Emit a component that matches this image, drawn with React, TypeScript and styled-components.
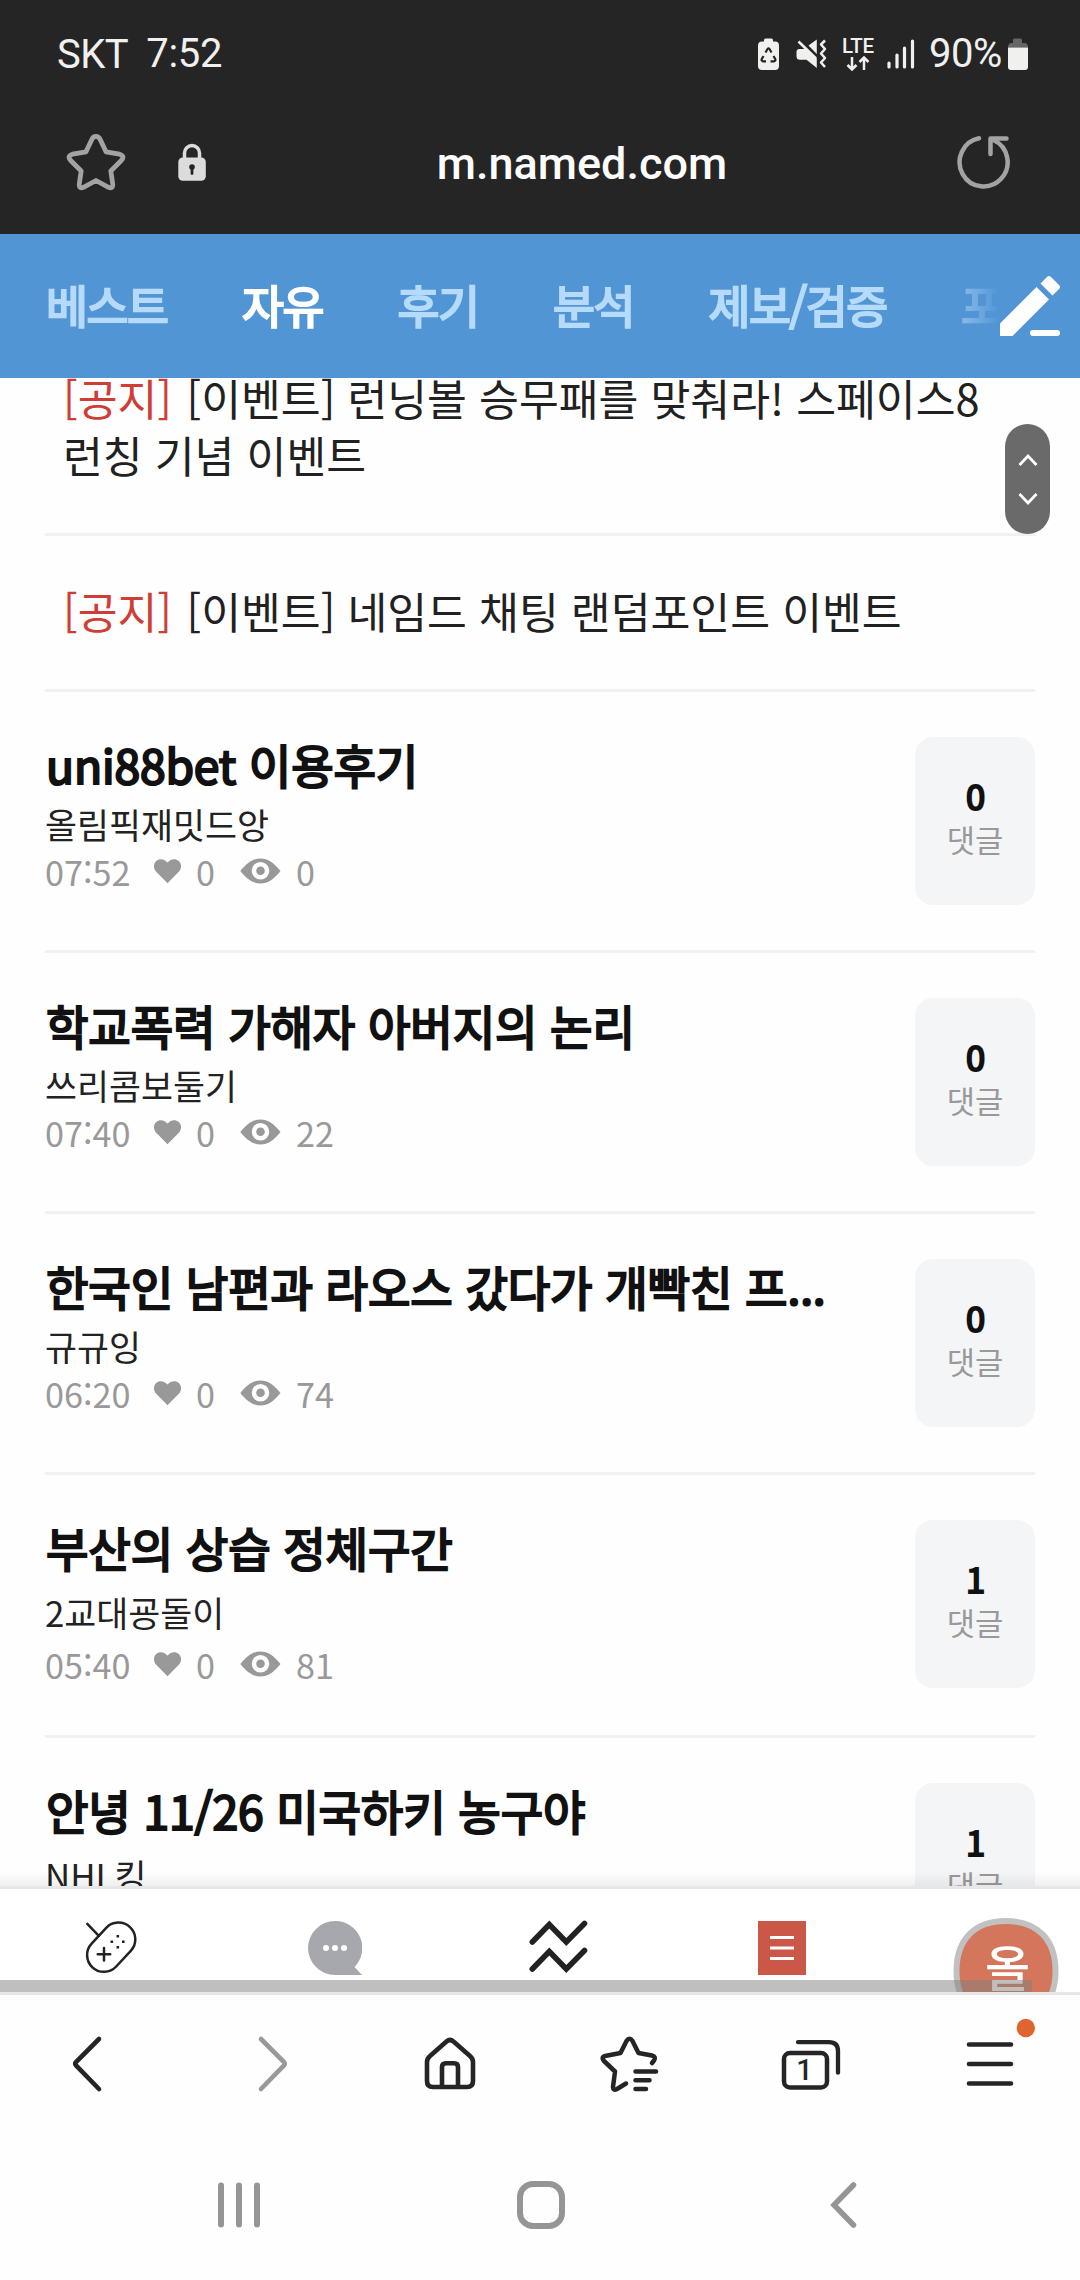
import React from "react";
import styled, { createGlobalStyle } from "styled-components";

const GlobalStyle = createGlobalStyle`
  *, *::before, *::after { box-sizing: border-box; }
  body {
    margin: 0;
    background: #fefefe;
    font-family: "Noto Sans CJK KR", "Noto Sans", sans-serif;
  }
  svg { display: block; flex: none; }
`;

const Screen = styled.div`
  width: 1080px;
  height: 2280px;
  display: flex;
  flex-direction: column;
  overflow: hidden;
  background: #fefefe;
`;

/* ---------- system status bar ---------- */

const StatusBar = styled.header`
  flex: none;
  height: 108px;
  padding: 0 52px 0 57px;
  display: flex;
  align-items: center;
  justify-content: space-between;
  background: #252525;
  color: #f0f0ee;
  font-family: Roboto, sans-serif;
  font-size: 40px;
  line-height: 48px;
`;

const StatusLeft = styled.div`
  display: flex;
  gap: 18px;
`;

const StatusText = styled.span<{ $shift?: number; $spacing?: number }>`
  margin-top: ${(p) => p.$shift ?? 0}px;
  letter-spacing: ${(p) => p.$spacing ?? 0}px;
`;

const BatteryLevel = styled(StatusText)`
  margin: 0 3px 0 7px;
`;

const StatusRight = styled.div`
  display: flex;
  align-items: center;
`;

/* ---------- address bar ---------- */

const AddressBar = styled.div`
  flex: none;
  height: 126px;
  padding: 0 68px 14px 65px;
  display: flex;
  align-items: center;
  background: #252525;
`;

const AddressSide = styled.div<{ $end?: boolean }>`
  width: 200px;
  display: flex;
  gap: 51px;
  justify-content: ${(p) => (p.$end ? "flex-end" : "flex-start")};
`;

const Domain = styled.div`
  flex: 1;
  padding-left: 87px;
  text-align: center;
  color: #fcfcfc;
  font-family: Roboto, sans-serif;
  font-size: 45px;
  font-weight: 500;
  line-height: 60px;
`;

/* ---------- board tabs ---------- */

const BoardTabs = styled.nav`
  flex: none;
  height: 144px;
  display: flex;
  align-items: center;
  padding-right: 20px;
  background: #5195d5;
`;

const TabScroller = styled.div`
  flex: 1;
  min-width: 0;
  display: flex;
  gap: 74.6px;
  padding: 0 0 4px 46px;
  overflow: hidden;
  -webkit-mask-image: linear-gradient(to right, #000 930px, transparent 1000px);
  mask-image: linear-gradient(to right, #000 930px, transparent 1000px);
`;

const BoardTab = styled.span<{ $active?: boolean }>`
  flex: none;
  color: ${(p) => (p.$active ? "#ffffff" : "#b5dafa")};
  font-size: 45.6px;
  -webkit-text-stroke: 2.2px currentColor;
  line-height: 70px;
  letter-spacing: -1.5px;
  white-space: nowrap;
`;

/* ---------- post list ---------- */

const ListViewport = styled.main`
  position: relative;
  flex: none;
  height: 1508px;
  padding: 0 45px;
  overflow: hidden;
`;

const NoticeRow = styled.div<{ $scrolled?: boolean }>`
  margin-top: ${(p) => (p.$scrolled ? -55 : 0)}px;
  padding: 46px 18px 50px;
  border-bottom: 3px solid #f1f1f1;
  color: #212121;
  font-size: 43.3px;
  line-height: 57px;
  white-space: nowrap;
`;

const NoticeTag = styled.span`
  margin-right: 2.5px;
  color: #d03d37;
`;

const PostRow = styled.article`
  display: flex;
  justify-content: space-between;
  align-items: flex-start;
  padding: 45px 0;
  border-bottom: 3px solid #f1f1f1;
`;

const PostBody = styled.div<{ $tall?: boolean }>`
  height: ${(p) => (p.$tall ? 170 : 168)}px;
  white-space: nowrap;
`;

const PostTitle = styled.h2`
  margin: 0 0 8px;
  padding-left: 1px;
  color: #111111;
  font-size: 46.2px;
  font-weight: 400;
  -webkit-text-stroke: 2.2px currentColor;
  letter-spacing: -0.15px;
  line-height: 53px;
`;

const PostAuthor = styled.div<{ $tall?: boolean }>`
  color: #222222;
  font-size: 34.8px;
  line-height: ${(p) => (p.$tall ? 63 : 53)}px;
`;

const PostMeta = styled.div`
  display: flex;
  align-items: center;
  color: #999999;
  font-size: 34.2px;
  line-height: 40px;
`;

const MetaValue = styled.span<{ $width?: number }>`
  width: ${(p) => (p.$width ? `${p.$width}px` : "auto")};
`;

const MetaIcon = styled.span`
  display: block;
  margin-right: 15px;
`;

const CommentBox = styled.div`
  width: 120px;
  height: 168px;
  padding-top: 35px;
  border-radius: 18px;
  background: #f4f5f7;
  text-align: center;
`;

const CommentCount = styled.div`
  padding-left: 1px;
  color: #111111;
  font-size: 34.6px;
  -webkit-text-stroke: 2px currentColor;
  line-height: 46px;
`;

const CommentLabel = styled.div`
  margin-top: 2px;
  color: #999999;
  font-size: 30.8px;
  line-height: 38px;
`;

const ScrollPill = styled.div`
  position: absolute;
  top: 46px;
  right: 30px;
  width: 45px;
  height: 110px;
  border-radius: 23px;
  background: #6a6a6a;
`;

const BottomShade = styled.div`
  position: absolute;
  left: 0;
  right: 0;
  bottom: 0;
  height: 15px;
  background: linear-gradient(to bottom, rgba(0, 0, 0, 0), rgba(0, 0, 0, 0.06));
`;

/* ---------- site tab bar ---------- */

const SiteBar = styled.nav`
  position: relative;
  flex: none;
  height: 109px;
  display: flex;
  overflow: hidden;
  border-top: 3px solid #e7e7e7;
  border-bottom: 3px solid #e6e6e6;
  background: #ffffff;
`;

const SiteCell = styled.div`
  flex: none;
  width: 223.5px;
  display: flex;
  justify-content: center;
  padding-top: 29px;
`;

const ScrollThumb = styled.div`
  position: absolute;
  left: 0;
  bottom: 0;
  width: 1032px;
  height: 12px;
  background: rgba(128, 128, 128, 0.5);
`;

/* ---------- browser toolbar and system keys ---------- */

const BrowserBar = styled.nav`
  flex: none;
  height: 139px;
  display: grid;
  grid-template-columns: repeat(6, 180px);
`;

const SystemBar = styled.nav`
  flex: none;
  height: 146px;
  padding: 0 88px;
  display: grid;
  grid-template-columns: repeat(3, 302px);
`;

type ArtProps = { box: string; children: React.ReactNode };

/* The viewBox is given as "x y width height"; the drawing is shown at that size. */
function Art({ box, children }: ArtProps) {
  const [, , w, h] = box.split(" ");
  return (
    <svg width={w} height={h} viewBox={box} fill="none">
      {children}
    </svg>
  );
}

const STAR =
  "M96 136.400 Q98.800 136.400 100.200 139.500 L106 151.800 L119.500 154.200 Q125.300 156 121.300 160.500 L110.800 171 L112.800 184.500 Q112.800 189 108.500 187.300 L96 180.500 L83.500 187.300 Q79.200 189 79.200 184.500 L81.200 171 L70.700 160.500 Q66.700 156 72.500 154.200 L86 151.800 L91.800 139.500 Q93.200 136.400 96 136.400Z";

function StatusIcons() {
  return (
    <Art box="754 30 168 48">
      <path d="M764 41.500v-1.500q0-1.500 1.500-1.500h6q1.500 0 1.500 1.500v1.500h2q4 0 4 4V66q0 4-4 4h-13q-4 0-4-4V45.500q0-4 4-4z" fill="#f0f0ee" />
      <path d="M765.500 52.500l2-3.500q1-1.500 2 0l2 3.500M763.500 56l-1.700 3q-.8 2 1.200 2.300h3M773.500 56l1.700 3q.8 2-1.200 2.300h-3.500" stroke="#252525" strokeWidth="2.200" />
      <path d="M799.500 49h6.500L816.800 58.500V68L806.500 59.700H800q-3.500 0-3.500-3.500V52q0-3 3-3zM808.500 45.500l8.300-6V54z" fill="#f0f0ee" />
      <path d="M798.500 41.500L816 58.500" stroke="#f0f0ee" strokeWidth="2.600" />
      <path d="M825 40.500l-4 4 4 4.500-4 4.500 4 4.500-4 4.500 4 4.500" stroke="#f0f0ee" strokeWidth="2.500" strokeLinejoin="round" />
      <path d="M852 57v12M847.500 65l4.500 4.500 4.500-4.500M864 70V58M859.500 62l4.500-4.500 4.500 4.500" stroke="#f0f0ee" strokeWidth="2.500" />
      <path d="M889 63v4M897 55v12M904.500 48v19M912.500 41v26" stroke="#f0f0ee" strokeWidth="3.200" strokeLinecap="round" />
      <text x="858" y="52.500" textAnchor="middle" fill="#f0f0ee" fontFamily="Roboto, sans-serif" fontWeight="500" fontSize="20.500" textLength="32">LTE</text>
    </Art>
  );
}

function BatteryIcon() {
  return (
    <Art box="1005 30 23 48">
      <path d="M1013 43v-3q0-1.500 1.500-1.500h6q1.500 0 1.500 1.500v3h2.500q3.500 0 3.500 4.500h-20q0-4.500 3.500-4.500z" fill="#666666" />
      <path d="M1008 47.500h20V67q0 3-3 3h-14q-3 0-3-3z" fill="#f0f0ee" />
    </Art>
  );
}

function HeartIcon() {
  return (
    <Art box="154 859 27 25">
      <path d="M167.500 883.300L156 871.500c-3-3.500-2.500-8 .2-10.500 3.300-3 8-2.200 11.300 1.500 3.300-3.700 8-4.500 11.300-1.500 2.700 2.500 3.200 7 .2 10.500z" fill="#999999" />
    </Art>
  );
}

function EyeIcon() {
  return (
    <Art box="240.500 858.500 41 26">
      <path fillRule="evenodd" d="M240.800 871.500C248 863 253.500 859 261 859s13 4 20 12.500C274 880 268.500 884 261 884s-13-4-20.200-12.500zM261 862.500a8.800 8.800 0 1 0 0 17.600 8.800 8.800 0 0 0 0-17.600z" fill="#999999" />
      <circle cx="261" cy="871.200" r="4.300" fill="#999999" />
    </Art>
  );
}

type Post = {
  title: string;
  author: string;
  comments: number;
  meta?: { time: string; likes: number; views: number };
  tall?: boolean;
};

const POSTS: Post[] = [
  { title: "uni88bet 이용후기", author: "올림픽재밋드앙", comments: 0, meta: { time: "07:52", likes: 0, views: 0 } },
  { title: "학교폭력 가해자 아버지의 논리", author: "쓰리콤보둘기", comments: 0, meta: { time: "07:40", likes: 0, views: 22 } },
  { title: "한국인 남편과 라오스 갔다가 개빡친 프...", author: "규규잉", comments: 0, meta: { time: "06:20", likes: 0, views: 74 } },
  { title: "부산의 상습 정체구간", author: "2교대굥돌이", comments: 1, meta: { time: "05:40", likes: 0, views: 81 }, tall: true },
  { title: "안녕 11/26 미국하키 농구야", author: "NHL킹", comments: 1, tall: true },
];

const BOARDS = ["베스트", "자유", "후기", "분석", "제보/검증", "포"];

const NOTICES = [
  ["[이벤트] 런닝볼 승무패를 맞춰라! 스페이스8", "런칭 기념 이벤트"],
  ["[이벤트] 네임드 채팅 랜덤포인트 이벤트"],
];

export default function App() {
  return (
    <Screen lang="ko">
      <GlobalStyle />
      <StatusBar>
        <StatusLeft>
          <StatusText $shift={1} $spacing={-0.5}>SKT</StatusText>
          <StatusText $spacing={-0.3}>7:52</StatusText>
        </StatusLeft>
        <StatusRight>
          <StatusIcons />
          <BatteryLevel $spacing={-0.4}>90%</BatteryLevel>
          <BatteryIcon />
        </StatusRight>
      </StatusBar>

      <AddressBar>
        <AddressSide>
          <Art box="65 132 62 64">
            <path d={STAR} stroke="#a3a3a3" strokeWidth="4.800" strokeLinejoin="round" />
          </Art>
          <Art box="178 132 28 64">
            <path d="M184.500 161v-8a7.500 7.500 0 0 1 15 0v8" stroke="#dcdcdc" strokeWidth="3.500" />
            <rect x="178.300" y="157.500" width="27.500" height="23.200" rx="4.500" fill="#dcdcdc" />
            <path d="M192 166.500v7" stroke="#252525" strokeWidth="2.800" strokeLinecap="round" />
            <circle cx="192" cy="167" r="2.800" fill="#252525" />
          </Art>
        </AddressSide>
        <Domain>m.named.com</Domain>
        <AddressSide $end>
          <Art box="957 132 56 64">
            <path d="M980 138.300A24 24.300 0 1 0 994.500 140" stroke="#a3a3a3" strokeWidth="4.500" strokeLinecap="round" />
            <path d="M1007.500 138.500h-16v15.500" stroke="#a3a3a3" strokeWidth="4.500" strokeLinecap="round" strokeLinejoin="round" />
          </Art>
        </AddressSide>
      </AddressBar>

      <BoardTabs>
        <TabScroller>
          {BOARDS.map((name) => (
            <BoardTab key={name} $active={name === "자유"}>
              {name}
            </BoardTab>
          ))}
        </TabScroller>
        <Art box="1000 275 60 62">
          <path d="M1000 336v-12.500L1036.500 287l12.500 12.500L1012.500 336z" fill="#ffffff" />
          <path d="M1040.500 283.500l6.500-6.500q2-2 4 0l8 8q2 2 0 4l-6.500 6.500z" fill="#ffffff" />
          <rect x="1030" y="330" width="30" height="6" rx="3" fill="#ffffff" />
        </Art>
      </BoardTabs>

      <ListViewport>
        {NOTICES.map((lines, i) => (
          <NoticeRow key={lines[0]} $scrolled={i === 0}>
            <NoticeTag>[공지]</NoticeTag> {lines[0]}
            {lines[1] && (
              <>
                <br />
                {lines[1]}
              </>
            )}
          </NoticeRow>
        ))}
        {POSTS.map((post) => (
          <PostRow key={post.title}>
            <PostBody $tall={post.tall}>
              <PostTitle>{post.title}</PostTitle>
              <PostAuthor $tall={post.tall}>{post.author}</PostAuthor>
              {post.meta && (
                <PostMeta>
                  <MetaValue $width={109}>{post.meta.time}</MetaValue>
                  <MetaIcon>
                    <HeartIcon />
                  </MetaIcon>
                  <MetaValue $width={44}>{post.meta.likes}</MetaValue>
                  <MetaIcon>
                    <EyeIcon />
                  </MetaIcon>
                  <MetaValue>{post.meta.views}</MetaValue>
                </PostMeta>
              )}
            </PostBody>
            <CommentBox>
              <CommentCount>{post.comments}</CommentCount>
              <CommentLabel>댓글</CommentLabel>
            </CommentBox>
          </PostRow>
        ))}
        <ScrollPill>
          <Art box="1005 424 45 110">
            <path d="M1019.500 465l8.500-9 8.500 9M1019.500 494l8.500 9 8.500-9" stroke="#ffffff" strokeWidth="2.800" />
          </Art>
        </ScrollPill>
        <BottomShade />
      </ListViewport>

      <SiteBar>
        <SiteCell>
          <Art box="84.500 1918 56 60">
            <rect x="-16.800" y="-27.500" width="33.600" height="55" rx="16.800" transform="translate(111.700 1947.200) rotate(43)" stroke="#222222" strokeWidth="2.500" />
            <path d="M87.800 1923.800l11.500 12" stroke="#222222" strokeWidth="2.500" strokeLinecap="round" />
            <path d="M104.500 1948v12.500M98.200 1954.200h12.500" stroke="#222222" strokeWidth="2.500" strokeLinecap="round" />
            <path d="M117 1935h2.600v2.600H117zM117 1946h2.600v2.600H117zM111 1940.500h2.600v2.600H111zM122.500 1940.500h2.600v2.600h-2.600z" fill="#222222" />
          </Art>
        </SiteCell>
        <SiteCell>
          <Art box="308 1918 54 60">
            <path d="M335 1921a27 27 0 0 1 19.500 46l7.500 8h-27a27 27 0 0 1 0-54z" fill="#a7a8ad" />
            <circle cx="326" cy="1948" r="3" fill="#ffffff" />
            <circle cx="335" cy="1948" r="3" fill="#ffffff" />
            <circle cx="344" cy="1948" r="3" fill="#ffffff" />
          </Art>
        </SiteCell>
        <SiteCell>
          <Art box="529 1918 60 60">
            <path d="M532.300 1942l17-17.500 17 17.500 18.200-18.500M532.300 1969l17-17.500 17 17.500 18.200-18.500" stroke="#222222" strokeWidth="5.600" strokeLinecap="round" />
          </Art>
        </SiteCell>
        <SiteCell>
          <Art box="758 1918 48 60">
            <path d="M758 1921h48v54h-48z" fill="#cb5749" />
            <path d="M770 1937.500h24M770 1948h24M770 1958.500h24" stroke="#ffffff" strokeWidth="3" />
          </Art>
        </SiteCell>
        <SiteCell>
          <Art box="952.500 1918 106 74">
            <path d="M956 1971C956 1940 973.500 1921 1005.500 1921S1055 1940 1055 1971 1037.500 2021 1005.500 2021 956 2002 956 1971z" fill="#d4765b" stroke="#c1c1c1" strokeWidth="6" />
            <text x="1007" y="1987" textAnchor="middle" fill="#ffffff" fontFamily="'Noto Sans CJK KR', sans-serif" fontWeight="500" fontSize="49">올</text>
          </Art>
        </SiteCell>
        <ScrollThumb />
      </SiteBar>

      <BrowserBar>
        <Art box="0 1995 180 139">
          <path d="M99 2039l-23 23q-1.500 1.700 0 3.400l23 23.600" stroke="#252525" strokeWidth="4.600" strokeLinecap="round" />
        </Art>
        <Art box="180 1995 180 139">
          <path d="M261 2039l23 23q1.500 1.700 0 3.400l-23 23.600" stroke="#999999" strokeWidth="4.600" strokeLinecap="round" />
        </Art>
        <Art box="360 1995 180 139">
          <path d="M427 2062q0-3.500 3-6l16.500-14.500q3.500-3 7 0L470 2056q3 2.500 3 6v19q0 6-6 6h-34q-6 0-6-6zM442 2087v-20q0-3.800 3.800-3.800h8.400q3.800 0 3.800 3.800v20" stroke="#252525" strokeWidth="4.600" />
        </Art>
        <Art box="540 1995 180 139">
          <path d="M652 2063l2-2.500q2.500-4-2-5l-13.500-2.500-6-12q-3-4.500-6 0L620.500 2053l-15.500 3q-4 1.200-1.500 4.500L615 2071.500l-2 15.500q0 4 4 2l9-5.500M635.500 2071.500H656M635.500 2080.200h14M635.500 2089h10.500" stroke="#252525" strokeWidth="4.500" strokeLinecap="round" strokeLinejoin="round" />
        </Art>
        <Art box="720 1995 180 139">
          <rect x="784" y="2053" width="43" height="34.500" rx="6" stroke="#252525" strokeWidth="4.500" />
          <path d="M798 2042.200h31q9 0 9 9v21.500" stroke="#252525" strokeWidth="4.300" strokeLinecap="round" />
          <text x="804.500" y="2080" textAnchor="middle" fill="#252525" fontFamily="Roboto, sans-serif" fontWeight="500" fontSize="29">1</text>
        </Art>
        <Art box="900 1995 180 139">
          <path d="M969 2044.500h42M969 2064h42M969 2083.500h42" stroke="#252525" strokeWidth="4.600" strokeLinecap="round" />
          <circle cx="1025.800" cy="2028" r="9.200" fill="#dd6630" />
        </Art>
      </BrowserBar>

      <SystemBar>
        <Art box="88 2134 302 146">
          <path d="M221 2185.500v39M239 2185.500v39M257 2185.500v39" stroke="#959595" strokeWidth="6" strokeLinecap="round" />
        </Art>
        <Art box="390 2134 302 146">
          <rect x="520" y="2184" width="42" height="42" rx="13" stroke="#959595" strokeWidth="6" />
        </Art>
        <Art box="692 2134 302 146">
          <path d="M853.500 2185l-19.500 20 19.500 20" stroke="#959595" strokeWidth="5.500" strokeLinecap="round" />
        </Art>
      </SystemBar>
    </Screen>
  );
}
